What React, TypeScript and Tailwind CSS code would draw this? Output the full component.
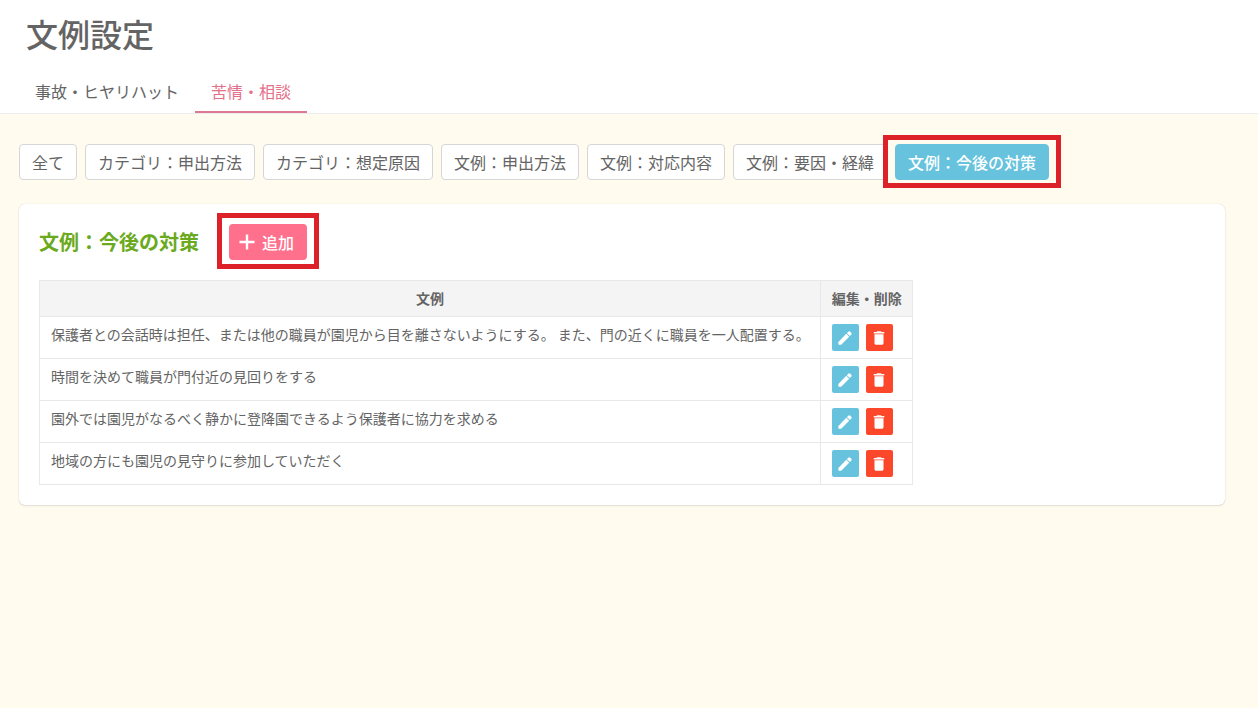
import type { ReactNode } from "react";
import { MdDelete } from "react-icons/md";

const tabs = [
  { label: "事故・ヒヤリハット", active: false },
  { label: "苦情・相談", active: true },
];

const filters = [
  "全て",
  "カテゴリ：申出方法",
  "カテゴリ：想定原因",
  "文例：申出方法",
  "文例：対応内容",
  "文例：要因・経緯",
];

const examples = [
  "保護者との会話時は担任、または他の職員が園児から目を離さないようにする。 また、門の近くに職員を一人配置する。",
  "時間を決めて職員が門付近の見回りをする",
  "園外では園児がなるべく静かに登降園できるよう保護者に協力を求める",
  "地域の方にも園児の見守りに参加していただく",
];

function PlusIcon() {
  return (
    <svg viewBox="0 0 24 24" className="size-6" fill="none" stroke="currentColor" strokeWidth="2.4" aria-hidden="true">
      <path d="M12 4.5v15M4.5 12h15" />
    </svg>
  );
}

function PencilIcon() {
  return (
    <svg viewBox="0 0 24 24" className="size-[18px]" fill="currentColor" aria-hidden="true">
      <path d="M3.2 17.2v3.2q0 .5.5.5h3.2L17.6 10.2l-3.9-3.9z" />
      <path d="M14.5 5.5l1.9-1.8q1.3-1.2 2.6 0l1.3 1.3q1.2 1.3 0 2.6l-1.9 1.8z" />
    </svg>
  );
}

// Red frame drawn around the control it wraps
function Highlight({ frame, children }: { frame: string; children: ReactNode }) {
  return (
    <div className="relative">
      {children}
      <div className={`pointer-events-none absolute z-10 border-5 border-[#dc2128] ${frame}`} />
    </div>
  );
}

function Header() {
  return (
    <header className="border-b border-[#ececec] bg-white px-[19px] pt-3">
      <h1 className="px-[7px] text-[32px] leading-[42px] font-medium">文例設定</h1>
      <nav className="mt-4 flex">
        {tabs.map((tab) => (
          <a
            key={tab.label}
            href="#"
            className={
              tab.active
                ? "border-b-2 border-[#dc7890] px-4 pt-[9px] pb-2 text-base text-[#e4708a]"
                : "border-b-2 border-transparent px-4 pt-[9px] pb-2 text-base"
            }
          >
            {tab.label}
          </a>
        ))}
      </nav>
    </header>
  );
}

function ExampleTable() {
  return (
    <table className="mt-5 border-collapse text-sm">
      <thead>
        <tr className="h-9 bg-[#f4f4f4]">
          <th className="border border-[#e8e8e8] px-[11px] pb-0.5 font-bold">文例</th>
          <th className="border border-[#e8e8e8] pr-[10px] pb-0.5 pl-[11px] font-bold">編集・削除</th>
        </tr>
      </thead>
      <tbody>
        {examples.map((text) => (
          <tr key={text}>
            <td className="border border-[#e8e8e8] py-[7px] pr-[10px] pl-[11px] align-top leading-5">{text}</td>
            <td className="border border-[#e8e8e8] py-[7px] pr-[10px] pl-[11px]">
              <div className="flex gap-[7px]">
                <button
                  type="button"
                  aria-label="編集"
                  className="flex size-[27px] items-center justify-center rounded-xs bg-[#67c3dd] text-white"
                >
                  <PencilIcon />
                </button>
                <button
                  type="button"
                  aria-label="削除"
                  className="flex size-[27px] items-center justify-center rounded-xs bg-[#fd472b] text-white"
                >
                  <MdDelete size={18} />
                </button>
              </div>
            </td>
          </tr>
        ))}
      </tbody>
    </table>
  );
}

export default function App() {
  return (
    <div className="min-h-screen bg-[#fffbee] font-['Noto_Sans_CJK_JP',sans-serif] text-[#646464]">
      <Header />
      <main className="pt-[30px] pr-[33px] pb-10 pl-[19px]">
        <div className="flex flex-wrap gap-2">
          {filters.map((label) => (
            <button
              key={label}
              type="button"
              className="h-9 rounded-sm border border-[#d6d6d6] bg-white px-3 text-base whitespace-nowrap"
            >
              {label}
            </button>
          ))}
          <Highlight frame="-inset-x-3 -top-[9px] -bottom-2">
            <button
              type="button"
              className="h-9 rounded-sm border border-[#67c3dd] bg-[#67c3dd] px-3 text-base font-medium whitespace-nowrap text-white"
            >
              文例：今後の対策
            </button>
          </Highlight>
        </div>

        <section className="mt-6 rounded-md bg-white p-5 shadow-[0_0_1px_rgba(0,0,0,0.2),0_1px_2px_rgba(0,0,0,0.1)]">
          <div className="flex items-center gap-[30px]">
            <h2 className="text-xl font-bold text-[#6aaa1c]">文例：今後の対策</h2>
            <Highlight frame="-inset-x-3 -top-[11px] -bottom-[9px]">
              <button
                type="button"
                className="flex h-9 items-center gap-[3px] rounded-sm bg-[#ff708c] pr-[13px] pl-[6px] text-base font-medium text-white"
              >
                <PlusIcon />
                追加
              </button>
            </Highlight>
          </div>
          <ExampleTable />
        </section>
      </main>
    </div>
  );
}
